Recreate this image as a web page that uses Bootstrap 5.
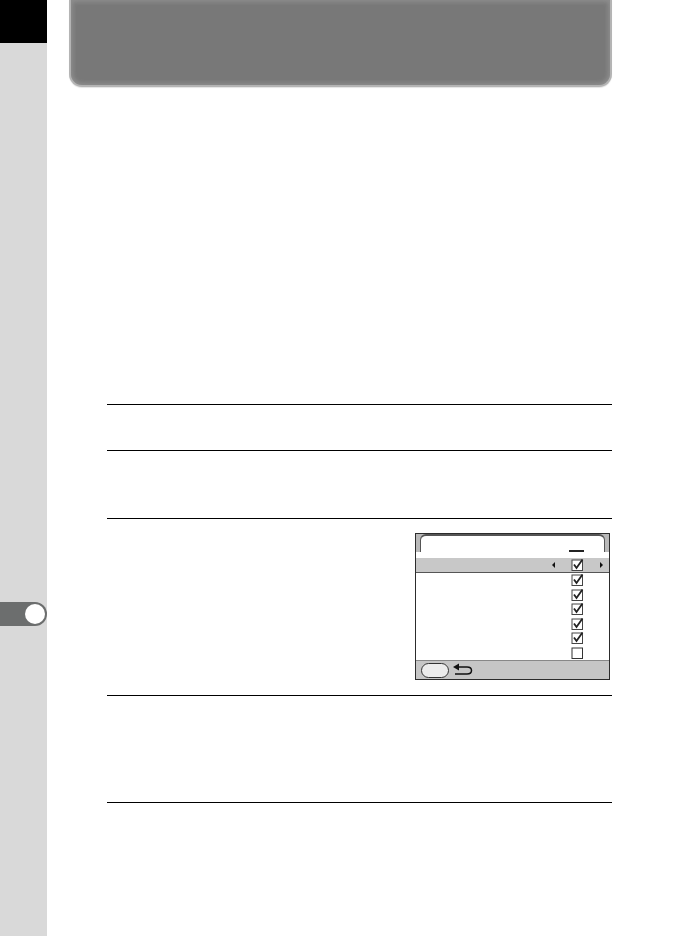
<!DOCTYPE html>
<html lang="en">
<head>
<meta charset="utf-8">
<title>Manual page</title>
<link href="https://cdn.jsdelivr.net/npm/bootstrap@5.3.0/dist/css/bootstrap.min.css" rel="stylesheet">
<style>
body { background:#fff; height:936px; overflow:hidden; font-family:"Liberation Sans",sans-serif; }
.side-rail { width:47px; height:936px; background:#d9d9d9; }
.side-black { height:43px; background:#000; }
.side-tab { margin-top:559px; height:24px; background:#6c6e6e; border-radius:0 12px 12px 0; padding-right:2px; }
.side-dot { width:20px; height:20px; background:#fff; border-radius:50%; }
.page-main { width:543px; margin-left:22px; }
.banner { height:87px; background:#787878; border:solid #b4b4b4; border-width:0 2px 2px 2px; border-radius:0 0 13px 13px; box-shadow:inset 0 0 4px 2px #8e8e8e, 0 1px 1px #e4e4e4; }
.steps { margin-top:317px; margin-left:38px; }
.step { border-top:1px solid #000; }
.step-a { height:46px; } .step-b { height:68px; } .step-c { height:177px; padding-top:14px; } .step-d { height:107px; }
.step-end { border-top:1px solid #000; }
.lcd { width:195px; height:147px; margin-right:2px; border:1px solid #2c2c2c; background:#fff; }
.lcd-head { height:18px; background:#b9b9b9; padding:0 4px; }
.lcd-tab { height:18px; background:#fff; border:solid #555; border-width:2px 1px 0 1px; border-radius:6px 6px 0 0; padding-right:20px; }
.lcd-dash { width:15px; height:2px; background:#222; }
.lcd-gap { height:6px; }
.lcd-row { height:14.5px; padding-right:25px; }
.lcd-row.on { background:#c8c8c8; border-bottom:1px solid #555; padding-right:6px; }
.lcd-row svg { display:block; }
.lcd-bar { height:19px; background:#c6c6c6; border-top:1px solid #888; padding-left:5px; }
.lcd-oval { width:28px; height:15px; background:#ececec; border:1px solid #333; border-radius:8px; }
.gap-l { margin-right:16px; }
.gap-r { margin-left:16px; }
</style>
</head>
<body>
<svg width="0" height="0" class="d-none">
  <symbol id="chk" viewBox="0 0 13 13">
    <rect x="1" y="2" width="10.5" height="10.5" fill="#fff" stroke="#444" stroke-width="1"/>
    <path d="M3 6.5 L5.5 10 L11.5 1.5" fill="none" stroke="#222" stroke-width="1.8"/>
  </symbol>
</svg>
<div class="d-flex">
  <div class="side-rail flex-shrink-0">
    <div class="side-black"></div>
    <div class="side-tab d-flex align-items-center justify-content-end"><div class="side-dot"></div></div>
  </div>
  <div class="page-main flex-shrink-0">
    <div class="banner"></div>
    <div class="steps">
      <div class="step step-a"></div>
      <div class="step step-b"></div>
      <div class="step step-c d-flex justify-content-end">
        <div class="lcd d-flex flex-column">
          <div class="lcd-head"><div class="lcd-tab d-flex justify-content-end align-items-end"><div class="lcd-dash"></div></div></div>
          <div class="lcd-gap"></div>
          <div class="lcd-row on d-flex justify-content-end align-items-center">
            <svg width="3" height="6" viewBox="0 0 3 6" class="gap-l"><path d="M3 0V6L0 3Z" fill="#111"/></svg>
            <svg width="13" height="13"><use href="#chk"/></svg>
            <svg width="3" height="6" viewBox="0 0 3 6" class="gap-r"><path d="M0 0V6L3 3Z" fill="#111"/></svg>
          </div>
          <div class="lcd-row d-flex justify-content-end align-items-center"><svg width="13" height="13"><use href="#chk"/></svg></div>
          <div class="lcd-row d-flex justify-content-end align-items-center"><svg width="13" height="13"><use href="#chk"/></svg></div>
          <div class="lcd-row d-flex justify-content-end align-items-center"><svg width="13" height="13"><use href="#chk"/></svg></div>
          <div class="lcd-row d-flex justify-content-end align-items-center"><svg width="13" height="13"><use href="#chk"/></svg></div>
          <div class="lcd-row d-flex justify-content-end align-items-center"><svg width="13" height="13"><use href="#chk"/></svg></div>
          <div class="lcd-row d-flex justify-content-end align-items-center"><svg width="13" height="13" viewBox="0 0 13 13"><rect x="1" y="2" width="10.5" height="10.5" fill="#fff" stroke="#333"/></svg></div>
          <div class="flex-grow-1"></div>
          <div class="lcd-bar d-flex align-items-center">
            <div class="lcd-oval"></div>
            <svg width="20" height="14" viewBox="0 0 20 14" class="ms-1"><path d="M0 4 L6 0.5 V7.5 Z" fill="#111"/><path d="M5 4 H14 C20 4 20 11 14 11 H2" fill="none" stroke="#111" stroke-width="1.5"/></svg>
          </div>
        </div>
      </div>
      <div class="step step-d"></div>
      <div class="step-end"></div>
    </div>
  </div>
</div>
<script src="https://cdn.jsdelivr.net/npm/bootstrap@5.3.0/dist/js/bootstrap.bundle.min.js"></script>
</body>
</html>
